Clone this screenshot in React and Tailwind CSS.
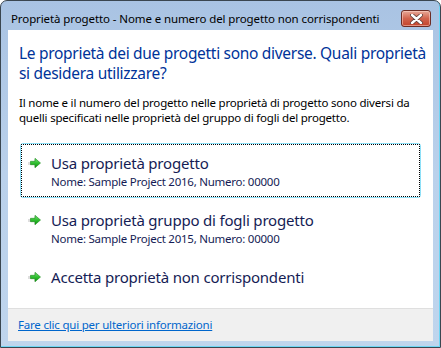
import React from "react";

const font = { fontFamily: '"Noto Sans", "Open Sans", sans-serif' };

const GreenArrow = () => (
  <svg width="14" height="12" viewBox="0 0 14 12" className="shrink-0">
    <defs>
      <linearGradient id="ga" x1="0" y1="0" x2="0" y2="1">
        <stop offset="0" stopColor="#7be37b" />
        <stop offset="0.5" stopColor="#2fbf2f" />
        <stop offset="1" stopColor="#119411" />
      </linearGradient>
    </defs>
    <path d="M1 4.5 H7 V1.5 L12 6 L7 10.5 V7.5 H1 Z" fill="#c8c8c8" opacity="0.6" transform="translate(-1 0.5)" />
    <path d="M2.5 4.3 H7 V1.3 L12.5 6 L7 10.7 V7.7 H2.5 Z" fill="url(#ga)" stroke="#1a8a1a" strokeWidth="0.6" />
  </svg>
);

// command link, the focused one has the light blue frame plus dotted focus rect
const CommandLink = ({ title, sub, focused }) => (
  <div
    className={
      "rounded-[3px] border " +
      (focused ? "border-[#8ee0f8]" : "border-transparent")
    }
  >
    <div
      className={
        "flex items-start rounded-[1px] border pl-[6px] pr-2 pt-[8px] pb-[6px] " +
        (focused ? "border-dotted border-black" : "border-transparent")
      }
    >
      <div className="mt-[4px] w-[23px]">
        <GreenArrow />
      </div>
      <div className="flex flex-col">
        <span className="text-[15px] leading-[20px] tracking-[-0.2px] text-[#151c55]">{title}</span>
        {sub && (
          <span className="mt-[1px] text-[11.5px] leading-[16px] tracking-[-0.25px] text-[#151c55]">{sub}</span>
        )}
      </div>
    </div>
  </div>
);

export default function App() {
  return (
    <div className="h-[348px] w-[441px] bg-white" style={font}>
      <div className="flex h-full flex-col rounded-t-[7px] border border-[#3a4650] bg-gradient-to-b from-[#a9c3e3] via-[#bad1eb] to-[#bfd5ed] px-[7px] pb-[6px] shadow-[inset_-1px_-1px_0_#6fd6f4]">
        <div className="flex h-[29px] items-start justify-between pl-[3px] pr-[2px]">
          <span className="mt-[10px] text-[11.5px] leading-[16px] tracking-[-0.1px] text-black">
            Proprietà progetto - Nome e numero del progetto non corrispondenti
          </span>
          <div className="mt-[9px] flex h-[17px] w-[30px] items-center justify-center rounded-[3px] border border-[#6d2d25] bg-gradient-to-b from-[#e6a898] via-[#d1644e] to-[#c4432b] shadow-[inset_0_0_0_1px_rgba(255,220,210,0.5)]">
            <svg width="13" height="10" viewBox="0 0 13 10">
              <path d="M2 1 L11 9 M11 1 L2 9" stroke="#5a3a36" strokeWidth="4" strokeLinecap="round" />
              <path d="M2 1 L11 9 M11 1 L2 9" stroke="#ffffff" strokeWidth="2.4" strokeLinecap="round" />
            </svg>
          </div>
        </div>
        <div className="flex flex-1 flex-col bg-white">
          <div className="flex flex-1 flex-col pl-[11px] pt-[13px]">
            <h1 className="text-[15.5px] leading-[20px] tracking-[-0.3px] text-[#003399]">
              Le proprietà dei due progetti sono diverse. Quali proprietà
              <br />
              si desidera utilizzare?
            </h1>
            <p className="mt-[12px] pr-[14px] text-[11.5px] leading-[15px] tracking-[-0.2px] text-black">
              Il nome e il numero del progetto nelle proprietà di progetto sono diversi da quelli specificati nelle proprietà del gruppo di fogli del progetto.
            </p>
            <div className="ml-[1px] mr-[12px] mt-[18px] flex flex-col gap-[2px]">
              <CommandLink
                focused
                title="Usa proprietà progetto"
                sub="Nome: Sample Project 2016, Numero: 00000"
              />
              <CommandLink
                title="Usa proprietà gruppo di fogli progetto"
                sub="Nome: Sample Project 2015, Numero: 00000"
              />
              <CommandLink title="Accetta proprietà non corrispondenti" />
            </div>
          </div>
          <div className="flex h-[33px] items-center border-t border-[#dfdfdf] bg-[#f0f0f0] px-[10px]">
            <a href="#" className="text-[11.5px] tracking-[-0.2px] text-[#0066cc] underline">
              Fare clic qui per ulteriori informazioni
            </a>
          </div>
        </div>
      </div>
    </div>
  );
}
